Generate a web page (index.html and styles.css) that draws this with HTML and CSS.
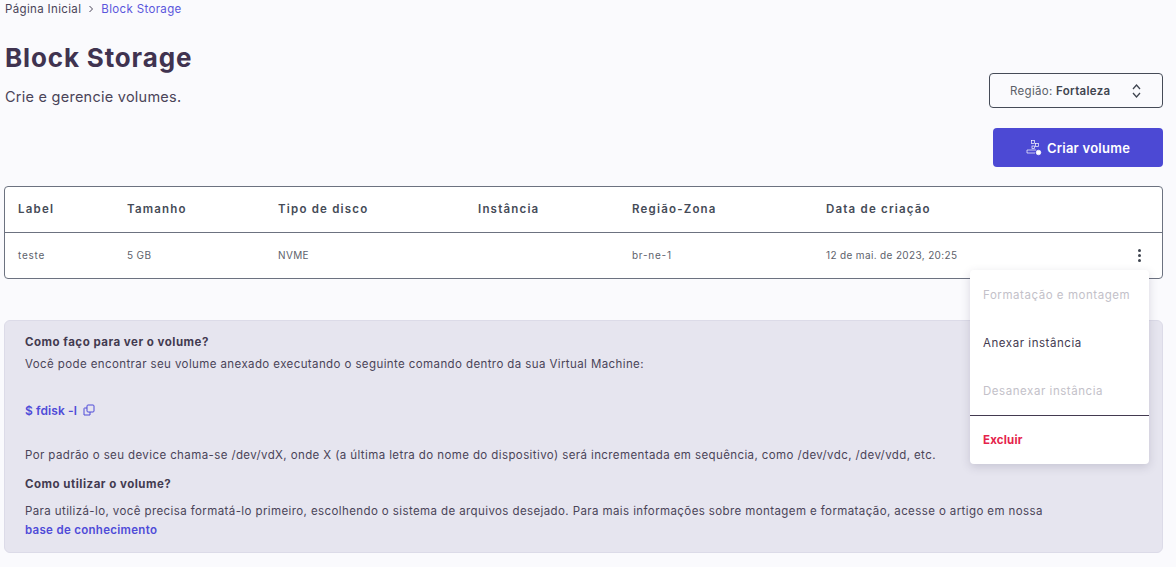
FILE: index.html
```html
<!DOCTYPE html>
<html lang="pt-BR">
<head>
<meta charset="utf-8">
<title>Block Storage</title>
<link rel="stylesheet" href="styles.css">
</head>
<body>
<main class="page">
  <nav class="crumbs"><span>Página Inicial</span>
    <svg class="chev" width="6" height="8" viewBox="0 0 6 8"><path d="M1.5 1l3 3-3 3" fill="none" stroke="#4a4458" stroke-width="1"/></svg>
    <span class="crumb-current">Block Storage</span></nav>
  <header class="head">
    <div class="head-text">
      <h1>Block Storage</h1>
      <p class="sub">Crie e gerencie volumes.</p>
    </div>
    <div class="region"><span class="region-text">Região: <b>Fortaleza</b></span>
      <svg width="9" height="14" viewBox="0 0 9 14"><path d="M1 5l3.500-4 3.500 4M1 9l3.500 4 3.500-4" fill="none" stroke="#3f4550" stroke-width="1.300"/></svg>
    </div>
  </header>
  <div class="actions">
    <button class="create">
      <svg width="16" height="16" viewBox="0 0 16 16" fill="none" stroke="#fff" stroke-width=".7"><rect x="5.500" y=".5" width="3" height="3"/><rect x="9.500" y="3.500" width="3" height="3"/><rect x="6" y="6" width="2.500" height="2.500"/><path d="M1 10h9M1 10v3h8"/><circle cx="12.500" cy="12.500" r="2.300" fill="#fff"/></svg>
      Criar volume</button>
  </div>
  <section class="table">
    <div class="row row-head">
      <span>Label</span><span>Tamanho</span><span>Tipo de disco</span><span>Instância</span><span>Região-Zona</span><span>Data de criação</span><span></span>
    </div>
    <div class="row row-body">
      <span class="wide">teste</span><span>5 GB</span><span>NVME</span><span></span><span class="wide">br-ne-1</span><span>12 de mai. de 2023, 20:25</span>
      <span class="dots"><i></i><i></i><i></i></span>
    </div>
    <div class="menu">
      <div class="item off">Formatação e montagem</div>
      <div class="item">Anexar instância</div>
      <div class="item off">Desanexar instância</div>
      <div class="item danger">Excluir</div>
    </div>
  </section>
  <section class="info">
    <h2>Como faço para ver o volume?</h2>
    <p>Você pode encontrar seu volume anexado executando o seguinte comando dentro da sua Virtual Machine:</p>
    <div class="cmd">$ fdisk -l
      <svg width="12" height="12" viewBox="0 0 12 12" fill="none" stroke="#4f4bd8" stroke-width="1"><rect x="4" y="1" width="7" height="7" rx="1"/><path d="M4 4H1.500a.5.5 0 0 0-.5.5V11h6V8"/></svg>
    </div>
    <p class="device">Por padrão o seu device chama-se /dev/vdX, onde X (a última letra do nome do dispositivo) será incrementada em sequência, como /dev/vdc, /dev/vdd, etc.</p>
    <h2 class="second">Como utilizar o volume?</h2>
    <p class="use">Para utilizá-lo, você precisa formatá-lo primeiro, escolhendo o sistema de arquivos desejado. Para mais informações sobre montagem e formatação, acesse o artigo em nossa</p>
    <a class="kb" href="#">base de conhecimento</a>
  </section>
</main>
</body>
</html>
```
FILE: styles.css
```css
* { box-sizing: border-box; }
html, body { margin: 0; padding: 0; }
body {
  background: #fafafd;
  color: #433a50;
  font-family: Inter, "Liberation Sans", sans-serif;
  overflow: hidden;
  height: 567px;
}
.page { padding: 0 13px 0 4px; }
.crumbs {
  display: flex; align-items: center; gap: 7px;
  height: 18px; font-size: 11.5px; letter-spacing: .35px; padding-left: 1px; color: #4a4458;
}
.crumb-current { color: #5a56dc; }
.head { display: flex; justify-content: space-between; align-items: flex-end; margin-top: 24px; }
.head-text { padding-left: 1px; }
h1 { margin: 0; font-size: 26px; line-height: 32px; font-weight: 700; letter-spacing: .85px; color: #403350; }
.sub { margin: 12px 0 0; font-size: 14.5px; line-height: 22px; letter-spacing: .25px; color: #4a4458; }
.region {
  width: 174px; height: 35px; border: 1px solid #454b57; border-radius: 4px;
  display: flex; align-items: center; justify-content: space-between;
  padding: 0 21px 0 20px; font-size: 11.5px; letter-spacing: .3px; color: #5a5f68;
}
.region b { color: #3f4550; font-weight: 600; }
.actions { display: flex; justify-content: flex-end; margin-top: 20px; }
.create {
  width: 170px; height: 39px; border: 0; border-radius: 4px; background: #4c49d4; color: #fff;
  font: 600 13px Inter, "Liberation Sans", sans-serif; letter-spacing: .25px;
  display: flex; align-items: center; justify-content: center; gap: 5px;
}
.table {
  position: relative; margin-top: 19px; background: #fff;
  border: 1px solid #6c7280; border-radius: 4px; height: 93px;
}
.row {
  display: grid; grid-template-columns: 109px 151px 200px 154px 194px 1fr 32px;
  padding-left: 13px; align-items: center;
}
.row-head {
  height: 46px; padding-bottom: 2px; border-bottom: 1px solid #6c7280;
  font-size: 11.5px; font-weight: 600; letter-spacing: 1.2px; color: #454b57;
}
.row-body { height: 45px; padding-bottom: 2px; font-size: 10px; letter-spacing: .35px; color: #5d626c; }
.wide { letter-spacing: .75px; }
.dots { display: flex; flex-direction: column; align-items: center; gap: 2px; width: 12px; margin: 2px 0 0 3px; }
.dots i { width: 3px; height: 3px; border-radius: 50%; background: #3f4550; }
.menu {
  position: absolute; top: 83px; right: 13px; width: 179px; height: 194px; padding-top: 1px;
  background: #fff; border-radius: 4px; box-shadow: 0 3px 10px rgba(60, 55, 90, .18);
  font-size: 11.5px; letter-spacing: .55px; z-index: 2;
}
.item { height: 48px; padding-left: 13px; display: flex; align-items: center; color: #433a50; }
.off { color: #c3c1c9; }
.danger { color: #e5234b; font-weight: 700; letter-spacing: .2px; border-top: 1px solid #433a50; }
.info {
  margin-top: 41px; height: 233px; background: #e6e5ef; border: 1px solid #dcdbe8; border-radius: 6px;
  padding: 13px 20px; font-size: 11.5px; letter-spacing: .4px; color: #4a4458;
}
.info h2 { margin: 0; font-size: 11.5px; line-height: 16px; font-weight: 700; letter-spacing: .5px; color: #433a50; }
.info p { margin: 6px 0 0; line-height: 16px; }
.cmd {
  display: flex; align-items: center; gap: 6px; margin-top: 30px; height: 16px;
  color: #4f4bd8; font-weight: 600; font-size: 12px; letter-spacing: .1px;
}
.info .device { margin-top: 29px; }
.info .second { margin-top: 13px; }
.info .use { margin-top: 11px; }
.kb { display: block; margin-top: 3px; line-height: 16px; color: #4f4bd8; font-weight: 600; letter-spacing: .3px; text-decoration: none; }
```
